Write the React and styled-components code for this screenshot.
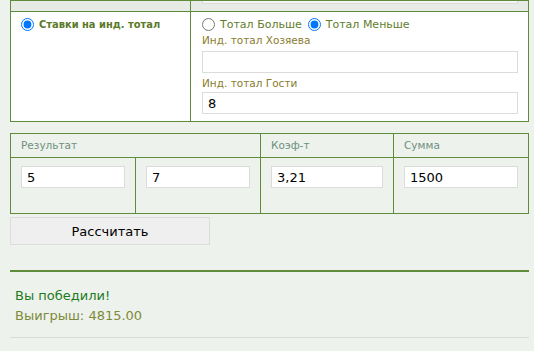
import React from 'react'
import styled, { createGlobalStyle } from 'styled-components'

const Global = createGlobalStyle`
  html, body {
    margin: 0;
    padding: 0;
    background: #edf2ec;
    font-family: "DejaVu Sans", Verdana, sans-serif;
  }
`

const Page = styled.div`
  width: 519px;
  padding: 0 5px 0 10px;
`

const Table = styled.table`
  width: 100%;
  border-collapse: collapse;
  table-layout: fixed;
  margin-top: ${(p) => p.mt || '0'};
`

const Td = styled.td`
  border: 1px solid #5e8c3a;
  padding: ${(p) => p.pad || '0'};
  vertical-align: top;
  background: ${(p) => p.bg || 'transparent'};
  height: ${(p) => p.h || 'auto'};
  box-sizing: border-box;
`

const CutInput = styled.div`
  height: 2px;
  margin: 0 10px 0 11px;
  border: 1px solid #dcdcdc;
  border-top: none;
  background: #f4f4f4;
`

const RadioRow = styled.div`
  display: flex;
  align-items: center;
  height: 15px;
`

const RadioLabel = styled.label`
  display: inline-flex;
  align-items: center;
  gap: 5px;
  white-space: nowrap;
  font-family: ${(p) => (p.bold ? '"DejaVu Sans Condensed", "DejaVu Sans", sans-serif' : '"DejaVu Sans", Verdana, sans-serif')};
  font-size: 11px;
  font-weight: ${(p) => (p.bold ? 'bold' : 'normal')};
  color: ${(p) => (p.bold ? '#5b7a2a' : '#5f7d2b')};
  margin-right: 6px;
  line-height: 15px;

  input {
    margin: 0;
    width: 13px;
    height: 13px;
  }
`

const FieldLabel = styled.div`
  font-size: 10.5px;
  line-height: 15px;
  color: #8a7c2e;
  margin: ${(p) => p.m || '0'};
`

const Input = styled.input`
  display: block;
  box-sizing: border-box;
  width: 100%;
  height: 22px;
  border: 1px solid #dcdcdc;
  background: #fff;
  padding: 0 5px;
  font-family: "DejaVu Sans", Verdana, sans-serif;
  font-size: 13px;
  color: #000;
  outline: none;
`

const HeadText = styled.div`
  font-size: 10.5px;
  line-height: 13px;
  color: #6f9080;
`

const Button = styled.button`
  display: block;
  width: 200px;
  height: 28px;
  margin: 3px 0 0 0;
  padding: 0;
  background: #efefef;
  border: 1px solid #dcdcdc;
  font-family: "DejaVu Sans", Verdana, sans-serif;
  font-size: 13px;
  color: #000;
`

const GreenRule = styled.div`
  height: 2px;
  background: #5e8c3a;
  margin-top: 25px;
`

const Result = styled.div`
  padding: 14px 5px 0;
  font-size: 13px;
  line-height: 20px;
`

const Won = styled.div`
  color: #1f7a1f;
`

const Prize = styled.div`
  color: #7d8a3a;
`

const GrayRule = styled.div`
  height: 1px;
  background: #d7dbd5;
  margin-top: 11px;
`

export default function App() {
  return (
    <>
      <Global />
      <Page>
        <Table>
          <colgroup>
            <col style={{ width: 180 }} />
            <col />
          </colgroup>
          <tbody>
            <tr>
              <Td bg="#e6ebe5" h="11px"></Td>
              <Td bg="#e6ebe5" h="11px"><CutInput /></Td>
            </tr>
            <tr>
              <Td bg="#fff" pad="5px 10px">
                <RadioRow>
                  <RadioLabel bold>
                    <input type="radio" name="mode" defaultChecked />
                    Ставки на инд. тотал
                  </RadioLabel>
                </RadioRow>
              </Td>
              <Td bg="#fff" pad="5px 10px 7px 11px">
                <RadioRow>
                  <RadioLabel>
                    <input type="radio" name="side" />
                    Тотал Больше
                  </RadioLabel>
                  <RadioLabel>
                    <input type="radio" name="side" defaultChecked />
                    Тотал Меньше
                  </RadioLabel>
                </RadioRow>
                <FieldLabel m="1px 0 3px">Инд. тотал Хозяева</FieldLabel>
                <Input defaultValue="" />
                <FieldLabel m="3px 0 1px">Инд. тотал Гости</FieldLabel>
                <Input defaultValue="8" />
              </Td>
            </tr>
          </tbody>
        </Table>

        <Table mt="11px">
          <colgroup>
            <col style={{ width: 125 }} />
            <col style={{ width: 125 }} />
            <col style={{ width: 133 }} />
            <col />
          </colgroup>
          <tbody>
            <tr>
              <Td colSpan={2} pad="5px 10px"><HeadText>Результат</HeadText></Td>
              <Td pad="5px 10px"><HeadText>Коэф-т</HeadText></Td>
              <Td pad="5px 10px"><HeadText>Сумма</HeadText></Td>
            </tr>
            <tr>
              <Td pad="8px 10px 25px"><Input defaultValue="5" /></Td>
              <Td pad="8px 10px"><Input defaultValue="7" /></Td>
              <Td pad="8px 10px"><Input defaultValue="3,21" /></Td>
              <Td pad="8px 10px"><Input defaultValue="1500" /></Td>
            </tr>
          </tbody>
        </Table>

        <Button>Рассчитать</Button>
        <GreenRule />
        <Result>
          <Won>Вы победили!</Won>
          <Prize>Выигрыш: 4815.00</Prize>
        </Result>
        <GrayRule />
      </Page>
    </>
  )
}
